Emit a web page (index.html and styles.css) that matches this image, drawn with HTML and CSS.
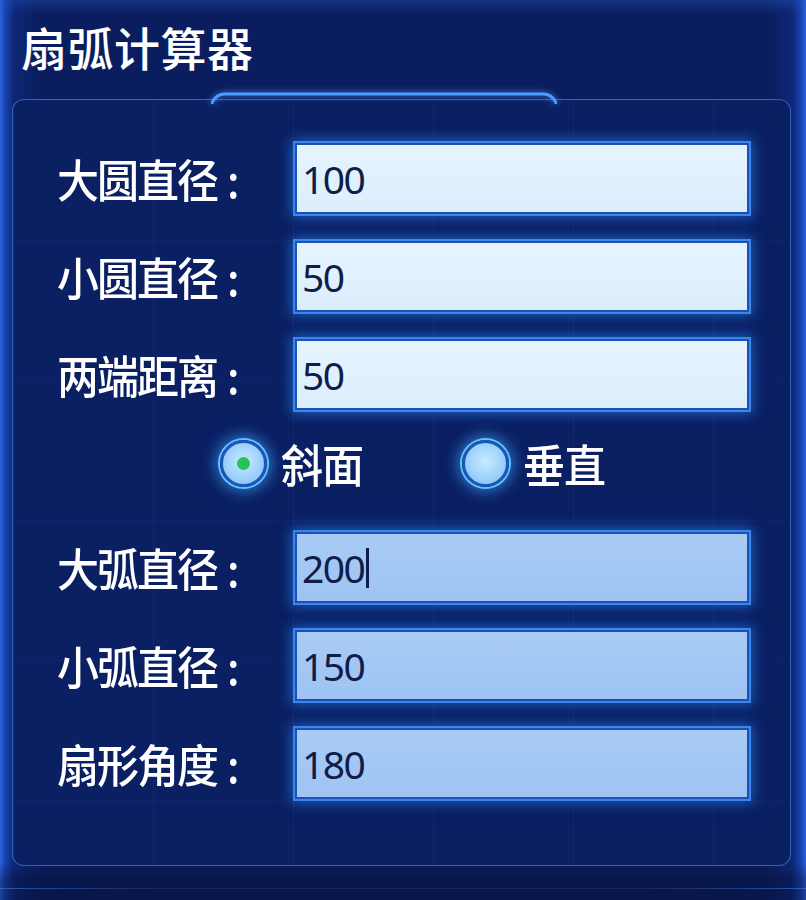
FILE: index.html
```html
<!DOCTYPE html>
<html lang="zh-CN">
<head>
<meta charset="utf-8">
<title>扇弧计算器</title>
<link rel="stylesheet" href="styles.css">
</head>
<body>
<div class="app">
  <header class="header"><h1 class="title">扇弧计算器</h1></header>
  <section class="panel">
    <svg class="notch" viewBox="0 0 346 12" width="346" height="12" aria-hidden="true">
      <path d="M1 11 Q5 2 14 2 L332 2 Q341 2 345 11" fill="none" stroke="#4b9dff" stroke-width="3" stroke-linecap="round"/>
    </svg>
    <div class="row"><span class="label">大圆直径<span class="colon">:</span></span><div class="field light">100</div></div>
    <div class="row"><span class="label">小圆直径<span class="colon">:</span></span><div class="field light">50</div></div>
    <div class="row"><span class="label">两端距离<span class="colon">:</span></span><div class="field light">50</div></div>
    <div class="radios">
      <div class="radio-item"><span class="radio checked"><span class="dot"></span></span><span class="radio-text">斜面</span></div>
      <div class="radio-item"><span class="radio"></span><span class="radio-text">垂直</span></div>
    </div>
    <div class="row"><span class="label">大弧直径<span class="colon">:</span></span><div class="field blue">200<span class="caret"></span></div></div>
    <div class="row"><span class="label">小弧直径<span class="colon">:</span></span><div class="field blue">150</div></div>
    <div class="row"><span class="label">扇形角度<span class="colon">:</span></span><div class="field blue">180</div></div>
  </section>
  <div class="footer-line"></div>
</div>
</body>
</html>
```
FILE: styles.css
```css
* { box-sizing: border-box; }
html, body { margin: 0; padding: 0; }
body {
  width: 806px;
  height: 900px;
  overflow: hidden;
  font-family: "Noto Sans CJK SC", "Noto Sans", sans-serif;
  background:
    linear-gradient(to bottom, rgba(40,90,200,0.35) 0, rgba(40,90,200,0) 14px),
    linear-gradient(to bottom, rgba(4,10,40,0) 0, rgba(4,10,40,0) 862px, rgba(4,10,40,0.35) 880px),
    linear-gradient(to right, #2a63e0 0, #1843b0 5px, #0d2676 14px, #0a1d5e 40px, #0a1d5e calc(100% - 40px), #0d2676 calc(100% - 14px), #1843b0 calc(100% - 5px), #2a63e0 100%);
}
.app { display: flex; flex-direction: column; }
.header { padding: 18px 0 0 21px; height: 99px; }
.title {
  margin: 0;
  font-size: 46px;
  line-height: 56px;
  font-weight: 500;
  color: #ffffff;
  letter-spacing: 0.5px;
}
.panel {
  position: relative;
  margin: 0 15px 0 12px;
  height: 767px;
  padding: 41px 39px 0 44px;
  border: 1.5px solid rgba(74, 132, 230, 0.65);
  border-radius: 12px;
  background-color: #0b1f63;
  background-image:
    linear-gradient(to right, rgba(90,150,255,0.07) 1px, transparent 1px),
    linear-gradient(to bottom, rgba(90,150,255,0.05) 1px, transparent 1px);
  background-size: 140px 140px, 140px 140px;
  display: flex;
  flex-direction: column;
  gap: 23px;
}
.notch {
  position: absolute;
  left: 198px;
  top: -8px;
  filter: drop-shadow(0 0 3px rgba(80, 160, 255, 0.8));
}
.row {
  display: flex;
  align-items: center;
  height: 75px;
  flex: none;
}
.label {
  width: 236px;
  flex: none;
  color: #ffffff;
  font-size: 42px;
  font-weight: 500;
  letter-spacing: -2px;
  display: inline-block;
  transform: scaleY(1.08);
  transform-origin: left center;
}
.colon { margin-left: 10px; }
.field {
  flex: 1;
  height: 75px;
  display: flex;
  align-items: center;
  padding-left: 7px;
  border: 2px solid #3b86ea;
  box-shadow: inset 0 0 0 2px #1c50b4, 0 0 12px 2px rgba(40, 140, 255, 0.55);
  font-family: "Noto Sans", "Open Sans", sans-serif;
  font-size: 39px;
  letter-spacing: -1.5px;
  color: #0f1d48;
}
.field.light { background: linear-gradient(to bottom, #e6f4ff, #dcedfd); }
.field.blue { background: linear-gradient(to bottom, #a9ccf6, #9ec3f3); }
.caret {
  display: inline-block;
  width: 3px;
  height: 40px;
  background: #0f1d48;
  margin-left: 2px;
}
.radios {
  height: 118px;
  margin: -23px 0;
  padding: 0 0 16px 163px;
  display: flex;
  align-items: center;
  gap: 99px;
  flex: none;
}
.radio-item { display: flex; align-items: center; gap: 14px; }
.radio {
  width: 47px;
  height: 47px;
  border-radius: 50%;
  border: 3px solid #1d56b8;
  background: radial-gradient(circle at 50% 45%, #c8ecff 0, #9fd2fb 55%, #7fb8ef 100%);
  box-shadow: 0 0 0 2px #5fc4ff, 0 0 14px 5px rgba(60, 170, 255, 0.6);
  display: flex;
  align-items: center;
  justify-content: center;
}
.dot {
  width: 13px;
  height: 13px;
  border-radius: 50%;
  background: #29c25a;
}
.radio-text {
  color: #ffffff;
  font-size: 42px;
  font-weight: 500;
  letter-spacing: -1px;
  display: inline-block;
  transform: scaleY(1.08);
}
.footer-line {
  height: 1px;
  margin-top: 22px;
  background: linear-gradient(to right, rgba(80,140,240,0.5), rgba(80,140,240,0.15) 20%, rgba(80,140,240,0.15) 80%, rgba(80,140,240,0.5));
}
```
